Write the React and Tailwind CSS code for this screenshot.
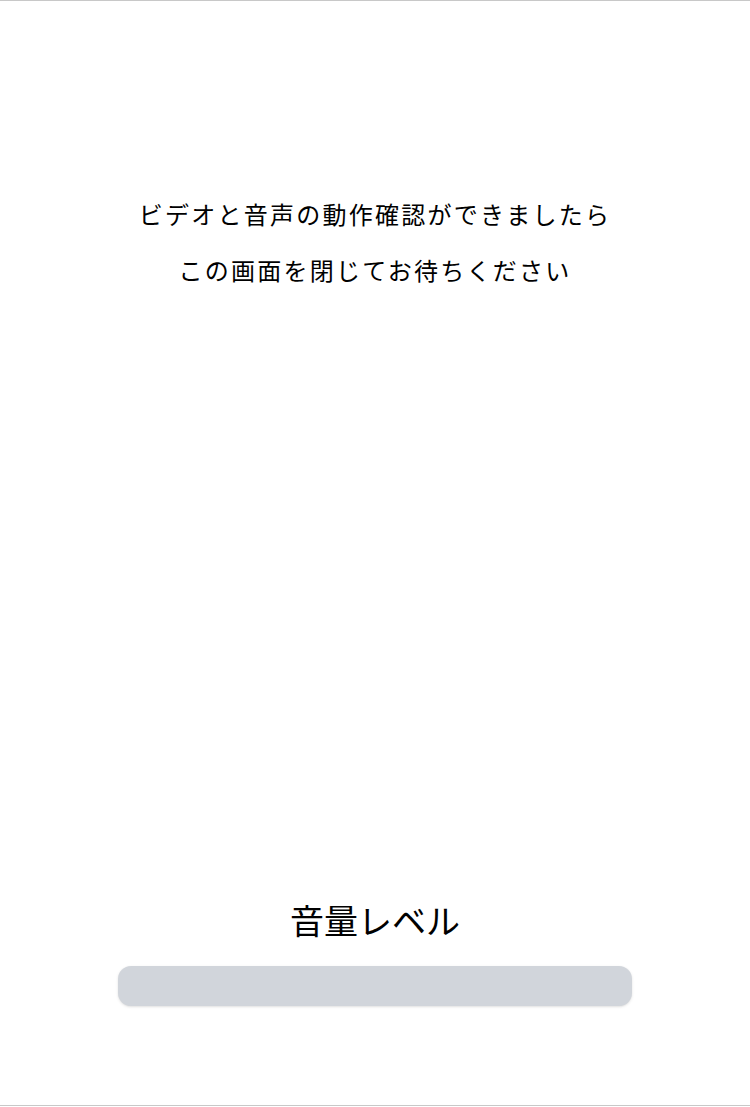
export default function App() {
  return (
    <div className="bg-white" style={{ fontFamily: '"Noto Sans CJK JP", "Noto Sans", sans-serif' }}>
      <div className="h-[1106px] border-y border-[#c8c8c8] flex flex-col items-center text-black">
        <div className="mt-[185px] text-center text-[24px] leading-[56px] tracking-[2.25px]">
          <p>ビデオと音声の動作確認ができましたら</p>
          <p>この画面を閉じてお待ちください</p>
        </div>
        <div className="flex-1" />
        <div className="w-full flex flex-col items-center pb-[99px]">
          <h2 className="text-[34px] leading-[48px] mb-[22px]">音量レベル</h2>
          <div className="w-[514px] h-[40px] rounded-[13px] bg-[#d1d5db] shadow-sm" />
        </div>
      </div>
    </div>
  );
}
